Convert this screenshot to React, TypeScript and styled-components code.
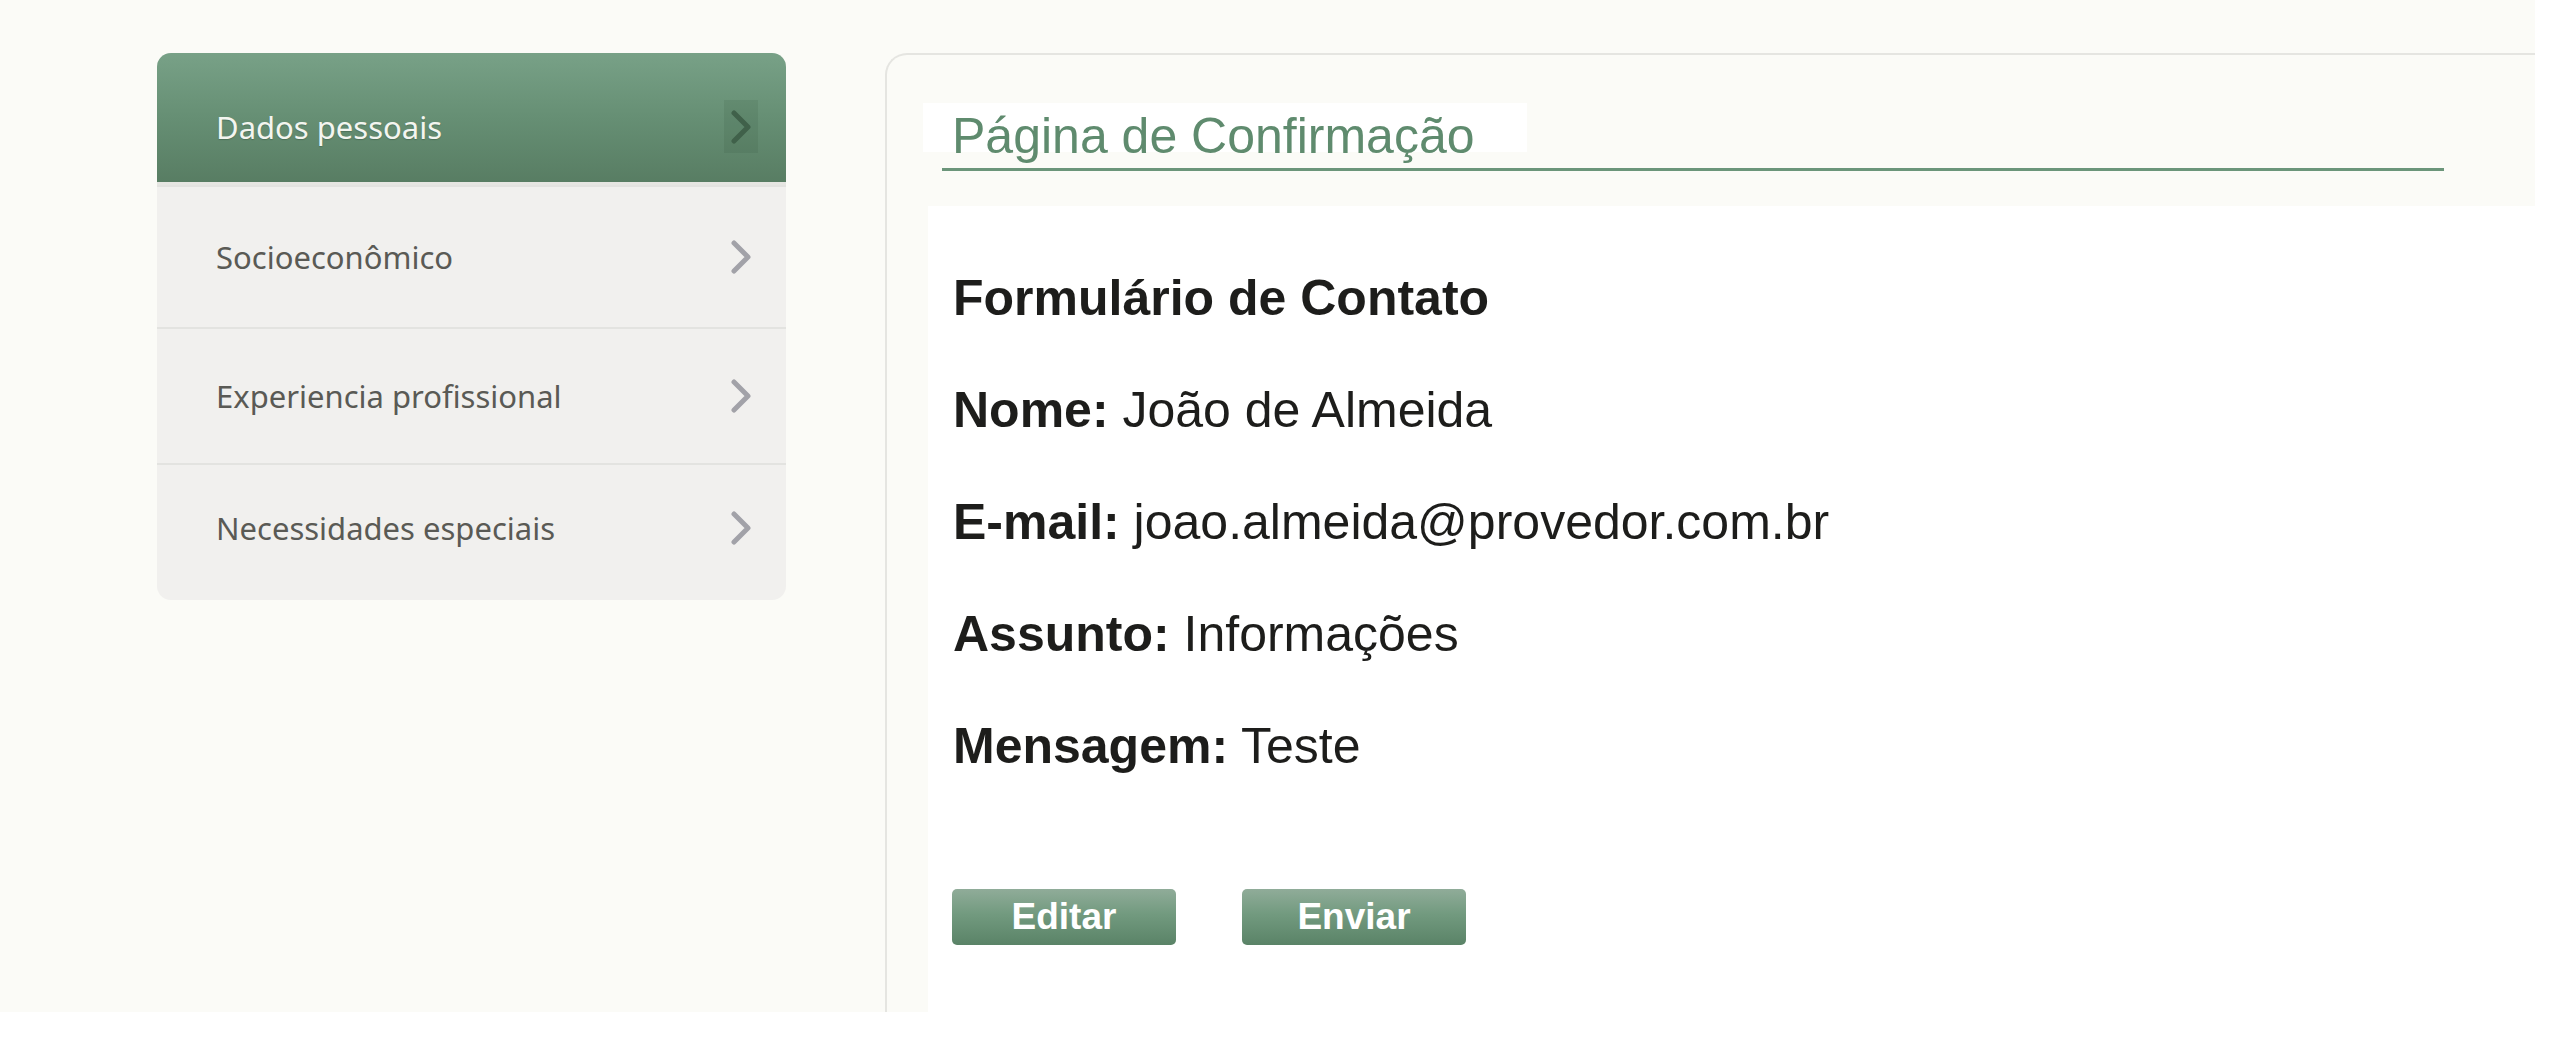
import React from "react";
import styled, { createGlobalStyle } from "styled-components";

const GlobalStyle = createGlobalStyle`
  html, body {
    margin: 0;
    padding: 0;
    background: #ffffff;
  }
  * { box-sizing: border-box; }
`;

const Page = styled.div`
  width: 2535px;
  height: 1012px;
  background: #fbfbf7;
  display: flex;
  align-items: flex-start;
  padding: 53px 0 0 157px;
  gap: 99px;
  overflow: hidden;
`;

const Sidebar = styled.nav`
  width: 629px;
  flex: none;
  background: #f1f0ee;
  border-radius: 14px;
  overflow: hidden;
  display: flex;
  flex-direction: column;
`;

const Item = styled.div<{ $active?: boolean; $h: number }>`
  height: ${(p) => p.$h}px;
  display: flex;
  align-items: center;
  justify-content: space-between;
  padding: ${(p) => (p.$active ? "18px" : "0")} 28px 0 59px;
  font-family: "Noto Sans", "DejaVu Sans", sans-serif;
  font-size: 31px;
  color: ${(p) => (p.$active ? "#f3f5f0" : "#5a5a55")};
  text-shadow: ${(p) => (p.$active ? "0 1px 1px rgba(40,70,50,0.35)" : "none")};
  background: ${(p) =>
    p.$active ? "linear-gradient(to bottom, #78a187 0%, #668f74 50%, #587d63 100%)" : "transparent"};
  border-bottom: ${(p) => (p.$active ? "3px solid #e6e6e2" : "none")};
  & + & {
    border-top: ${(p) => (p.$active ? "none" : "2px solid #e3e3e0")};
  }
  &:last-child {
    padding-bottom: 10px;
  }
`;

const ChevronSlot = styled.span<{ $active?: boolean }>`
  width: 34px;
  height: 53px;
  display: flex;
  align-items: center;
  justify-content: center;
  background: ${(p) => (p.$active ? "rgba(40, 70, 50, 0.12)" : "transparent")};
  color: ${(p) => (p.$active ? "#40614a" : "#a2a2a8")};
`;

const Panel = styled.section`
  flex: 1;
  align-self: stretch;
  margin-right: -40px;
  border-top: 2px solid #e5e5e1;
  border-left: 2px solid #e5e5e1;
  border-top-left-radius: 22px;
  padding-top: 48px;
  display: flex;
  flex-direction: column;
`;

const TitleBox = styled.div`
  margin-left: 36px;
  width: 604px;
  height: 49px;
  background: #ffffff;
  padding: 9px 0 0 29px;
  line-height: 49px;
`;

const Title = styled.h1`
  margin: 0;
  font-family: "Liberation Sans", Arial, sans-serif;
  font-weight: normal;
  font-size: 50px;
  line-height: 49px;
  color: #5f8b6e;
  white-space: nowrap;
`;

const Rule = styled.div`
  margin: 16px 0 0 55px;
  width: 1502px;
  height: 3px;
  background: #6b957a;
`;

const Content = styled.div`
  flex: 1;
  margin: 35px 0 0 41px;
  background: #ffffff;
  padding: 64px 0 0 25px;
  font-family: "Liberation Sans", Arial, sans-serif;
  color: #1d1d1b;
`;

const Line = styled.p<{ $heading?: boolean }>`
  margin: 0 0 56px 0;
  font-size: 50px;
  line-height: 56px;
  font-weight: ${(p) => (p.$heading ? "bold" : "normal")};
  white-space: nowrap;
`;

const Label = styled.b`
  font-weight: bold;
`;

const ButtonRow = styled.div`
  display: flex;
  gap: 66px;
  margin: 115px 0 0 -1px;
`;

const Button = styled.button`
  width: 224px;
  height: 56px;
  border: none;
  border-radius: 5px;
  background: linear-gradient(to bottom, #90ac99 0%, #729a7f 45%, #5a8367 100%);
  color: #ffffff;
  font-family: "Liberation Sans", Arial, sans-serif;
  font-weight: bold;
  font-size: 37px;
  line-height: 56px;
  padding: 0;
  cursor: pointer;
`;

const Chevron = () => (
  <svg width="24" height="34" viewBox="0 0 24 34" fill="none">
    <polyline
      points="5,3 19,17 5,31"
      stroke="currentColor"
      strokeWidth="5"
      strokeLinejoin="round"
      strokeLinecap="round"
    />
  </svg>
);

const items = [
  { label: "Dados pessoais", active: true, h: 132 },
  { label: "Socioeconômico", active: false, h: 142 },
  { label: "Experiencia profissional", active: false, h: 136 },
  { label: "Necessidades especiais", active: false, h: 137 },
];

export default function App() {
  return (
    <>
      <GlobalStyle />
      <Page>
        <Sidebar>
          {items.map((it) => (
            <Item key={it.label} $active={it.active} $h={it.h}>
              <span>{it.label}</span>
              <ChevronSlot $active={it.active}>
                <Chevron />
              </ChevronSlot>
            </Item>
          ))}
        </Sidebar>
        <Panel>
          <TitleBox>
            <Title>Página de Confirmação</Title>
          </TitleBox>
          <Rule />
          <Content>
            <Line $heading>Formulário de Contato</Line>
            <Line>
              <Label>Nome:</Label> João de Almeida
            </Line>
            <Line>
              <Label>E-mail:</Label> joao.almeida@provedor.com.br
            </Line>
            <Line>
              <Label>Assunto:</Label> Informações
            </Line>
            <Line>
              <Label>Mensagem:</Label> Teste
            </Line>
            <ButtonRow>
              <Button>Editar</Button>
              <Button>Enviar</Button>
            </ButtonRow>
          </Content>
        </Panel>
      </Page>
    </>
  );
}
